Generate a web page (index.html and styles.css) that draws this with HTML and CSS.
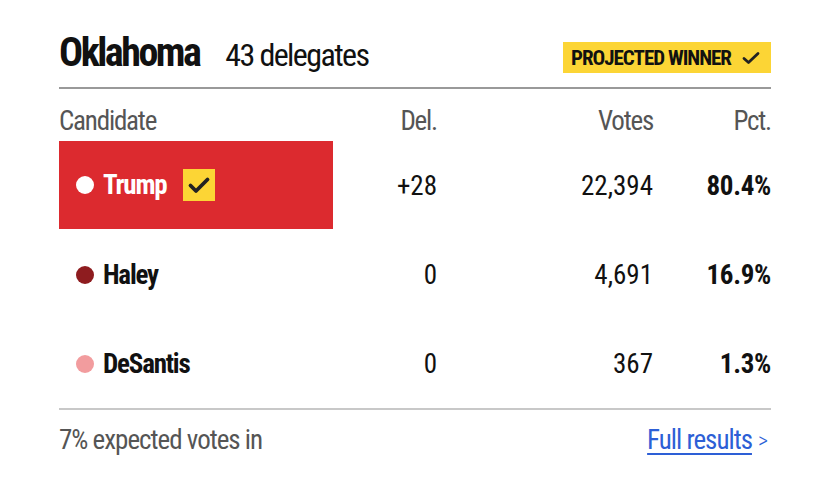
FILE: index.html
```html
<!DOCTYPE html>
<html>
<head>
<meta charset="utf-8">
<link rel="stylesheet" href="styles.css">
</head>
<body>
<div class="card">
  <div class="head">
    <div class="title">
      <h1 class="state">Oklahoma</h1>
      <span class="dels">43 delegates</span>
    </div>
    <div class="badge"><span class="badge-text">PROJECTED WINNER</span>
      <svg class="badge-check" width="20" height="16" viewBox="0 0 20 16"><path d="M3 8.5 L7.5 12.5 L17 3.5" fill="none" stroke="#222" stroke-width="2.8" stroke-linecap="round" stroke-linejoin="round"/></svg>
    </div>
  </div>
  <div class="table">
    <div class="th th-cand">Candidate</div>
    <div class="th num">Del.</div>
    <div class="th num">Votes</div>
    <div class="th num">Pct.</div>

    <div class="cell cand winner"><span class="dot dot-white"></span><span class="name">Trump</span>
      <span class="check"><svg width="32" height="32" viewBox="0 0 32 32"><path d="M7.5 16.5 L13 22 L24.5 10.5" fill="none" stroke="#222" stroke-width="3.8" stroke-linecap="round" stroke-linejoin="round"/></svg></span>
    </div>
    <div class="cell num">+28</div>
    <div class="cell num">22,394</div>
    <div class="cell num pct">80.4%</div>

    <div class="cell cand"><span class="dot dot-dark"></span><span class="name">Haley</span></div>
    <div class="cell num">0</div>
    <div class="cell num">4,691</div>
    <div class="cell num pct">16.9%</div>

    <div class="cell cand"><span class="dot dot-pink"></span><span class="name">DeSantis</span></div>
    <div class="cell num">0</div>
    <div class="cell num">367</div>
    <div class="cell num pct">1.3%</div>
  </div>
  <div class="foot">
    <span class="expected">7% expected votes in</span>
    <a class="full" href="#"><span class="full-text">Full results</span><span class="chev">&gt;</span></a>
  </div>
</div>
</body>
</html>
```
FILE: styles.css
```css
html, body {
  margin: 0;
  padding: 0;
  background: #fff;
}
body {
  font-family: "Roboto Condensed", "Liberation Sans Narrow", "DejaVu Sans Condensed", Roboto, sans-serif;
  font-stretch: condensed;
  color: #111;
}
.card {
  width: 712px;
  margin-left: 59px;
  padding-top: 25px;
}
.head {
  display: flex;
  justify-content: space-between;
  align-items: center;
  height: 62px;
  border-bottom: 2px solid #999;
}
.title {
  display: flex;
  align-items: baseline;
  gap: 26px;
  padding-bottom: 7px;
}
.state {
  margin: 0;
  font-size: 40px;
  font-weight: 700;
  letter-spacing: -2.5px;
}
.dels {
  font-size: 32px;
  font-weight: 400;
  letter-spacing: -1.6px;
}
.badge {
  display: flex;
  align-items: center;
  justify-content: space-between;
  box-sizing: border-box;
  width: 208px;
  background: #fcd535;
  padding: 0 10px 0 8px;
  height: 31px;
  margin-top: 3px;
  color: #111;
}
.badge-text {
  font-size: 21px;
  font-weight: 700;
  letter-spacing: -1px;
}
.table {
  display: grid;
  grid-template-columns: 274px 104px 216px 118px;
  grid-template-rows: 52px;
  grid-auto-rows: 89px;
  border-bottom: 2px solid #c8c8c8;
}
.th {
  font-size: 27px;
  color: #555;
  display: flex;
  align-items: center;
  padding-top: 12px;
  letter-spacing: -1.2px;
}
.th.num {
  justify-content: flex-end;
}
.cell {
  display: flex;
  align-items: center;
  font-size: 27px;
}
.cell.num {
  justify-content: flex-end;
}
.cand {
  padding-left: 17px;
  font-weight: 700;
}
.name {
  letter-spacing: -1.2px;
}
.winner {
  align-self: start;
  height: 88px;
  background: #dc2a2f;
  color: #fff;
}
.dot {
  width: 18px;
  height: 18px;
  border-radius: 50%;
  margin-right: 9px;
}
.dot-white { background: #fff; }
.dot-dark { background: #8e1c1f; }
.dot-pink { background: #f29c9e; }
.check {
  display: flex;
  width: 32px;
  height: 32px;
  background: #fcd535;
  margin-left: 17px;
}
.pct {
  font-weight: 700;
  letter-spacing: -0.3px;
}
.foot {
  display: flex;
  justify-content: space-between;
  align-items: center;
  height: 60px;
  font-size: 27px;
  letter-spacing: -1px;
}
.expected {
  color: #555;
}
.full {
  display: flex;
  align-items: center;
  gap: 6px;
  margin-right: 4px;
  color: #2d5fd6;
  text-decoration: none;
}
.full-text {
  text-decoration: underline;
  text-decoration-thickness: 2px;
  text-underline-offset: 4px;
}
.chev {
  font-size: 22px;
  font-weight: 300;
}
```
